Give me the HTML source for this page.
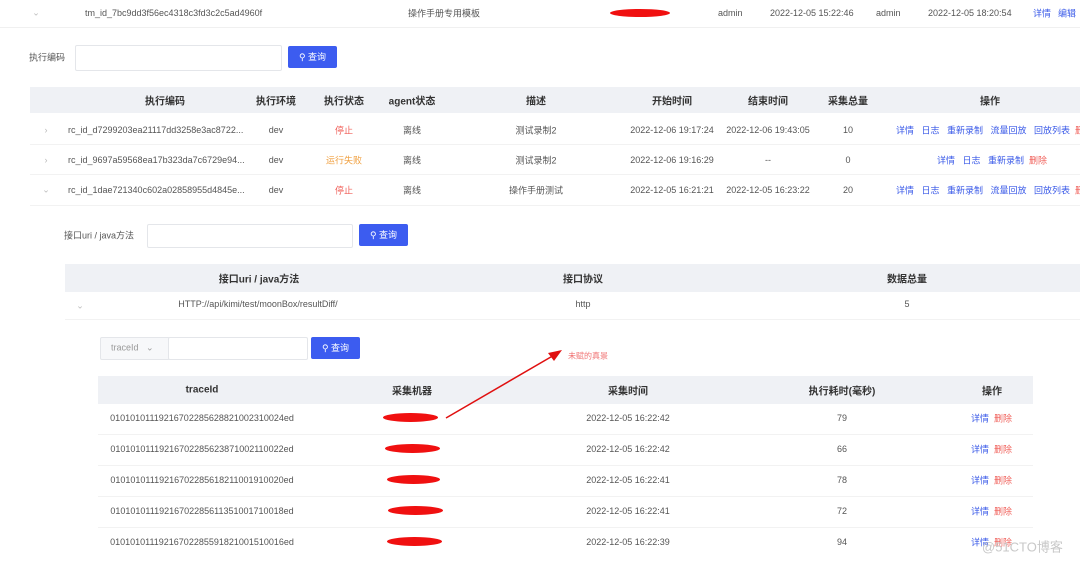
<!DOCTYPE html><html><head><meta charset="utf-8"><style>
body{margin:0;width:1080px;height:563px;overflow:hidden;background:#fff;font-family:"Liberation Sans","Noto Sans CJK SC",sans-serif;font-size:9px;color:#555;position:relative}
.c{position:absolute;transform:translate(-50%,-50%);white-space:nowrap}
.l{position:absolute;transform:translateY(-50%);white-space:nowrap}
.b{position:absolute}
.hd{color:#333;font-weight:bold;font-size:10px}
.blue{color:#3a5ae8}.red{color:#f0605a}.org{color:#f0a040}
.btn{position:absolute;background:#3c5cf0;color:#fff;border-radius:2px;font-size:9px;text-align:center}
.inp{position:absolute;border:1px solid #e4e6ea;border-radius:2px;background:#fff}
.blob{position:absolute;background:#f01010;border-radius:50%}
</style></head><body>
<div class="b" style="left:0;top:27px;width:1080px;height:1px;background:#f0f0f0"></div>
<span class="c" style="left:36px;top:13px;color:#bbb">⌄</span>
<span class="l" style="left:85px;top:13px">tm_id_7bc9dd3f56ec4318c3fd3c2c5ad4960f</span>
<span class="l" style="left:408px;top:13px">操作手册专用模板</span>
<div class="blob" style="left:610px;top:9px;width:60px;height:8px"></div>
<span class="l" style="left:718px;top:13px">admin</span>
<span class="l" style="left:770px;top:13px">2022-12-05 15:22:46</span>
<span class="l" style="left:876px;top:13px">admin</span>
<span class="l" style="left:928px;top:13px">2022-12-05 18:20:54</span>
<span class="l blue" style="left:1033px;top:13px">详情</span><span class="l blue" style="left:1058px;top:13px">编辑</span>

<span class="l" style="left:29px;top:57px">执行编码</span>
<div class="inp" style="left:75px;top:45px;width:205px;height:24px"></div>
<div class="btn" style="left:288px;top:46px;width:49px;height:22px;line-height:22px">⚲ 查询</div>

<div class="b" style="left:30px;top:87px;width:1050px;height:26px;background:#eff1f5"></div>
<span class="c hd" style="left:165px;top:100px">执行编码</span>
<span class="c hd" style="left:276px;top:100px">执行环境</span>
<span class="c hd" style="left:344px;top:100px">执行状态</span>
<span class="c hd" style="left:412px;top:100px">agent状态</span>
<span class="c hd" style="left:536px;top:100px">描述</span>
<span class="c hd" style="left:672px;top:100px">开始时间</span>
<span class="c hd" style="left:768px;top:100px">结束时间</span>
<span class="c hd" style="left:848px;top:100px">采集总量</span>
<span class="c hd" style="left:990px;top:100px">操作</span>
<div class="b" style="left:30px;top:144px;width:1050px;height:1px;background:#f2f2f2"></div>
<div class="b" style="left:30px;top:174px;width:1050px;height:1px;background:#f2f2f2"></div>
<div class="b" style="left:30px;top:205px;width:1050px;height:1px;background:#f2f2f2"></div>

<span class="c" style="left:46px;top:130px;color:#bbb">›</span>
<span class="l" style="left:68px;top:130px">rc_id_d7299203ea21117dd3258e3ac8722...</span>
<span class="c" style="left:276px;top:130px">dev</span><span class="c red" style="left:344px;top:130px">停止</span><span class="c" style="left:412px;top:130px">离线</span>
<span class="c" style="left:536px;top:130px">测试录制2</span><span class="c" style="left:672px;top:130px">2022-12-06 19:17:24</span><span class="c" style="left:768px;top:130px">2022-12-06 19:43:05</span><span class="c" style="left:848px;top:130px">10</span>
<span class="l blue" style="left:896px;top:130px">详情 &nbsp; 日志 &nbsp; 重新录制 &nbsp; 流量回放 &nbsp; 回放列表 &nbsp;<span class="red">删除</span></span>

<span class="c" style="left:46px;top:160px;color:#bbb">›</span>
<span class="l" style="left:68px;top:160px">rc_id_9697a59568ea17b323da7c6729e94...</span>
<span class="c" style="left:276px;top:160px">dev</span><span class="c org" style="left:344px;top:160px">运行失败</span><span class="c" style="left:412px;top:160px">离线</span>
<span class="c" style="left:536px;top:160px">测试录制2</span><span class="c" style="left:672px;top:160px">2022-12-06 19:16:29</span><span class="c" style="left:768px;top:160px">--</span><span class="c" style="left:848px;top:160px">0</span>
<span class="l blue" style="left:937px;top:160px">详情 &nbsp; 日志 &nbsp; 重新录制 &nbsp;<span class="red">删除</span></span>

<span class="c" style="left:46px;top:190px;color:#bbb">⌄</span>
<span class="l" style="left:68px;top:190px">rc_id_1dae721340c602a02858955d4845e...</span>
<span class="c" style="left:276px;top:190px">dev</span><span class="c red" style="left:344px;top:190px">停止</span><span class="c" style="left:412px;top:190px">离线</span>
<span class="c" style="left:536px;top:190px">操作手册测试</span><span class="c" style="left:672px;top:190px">2022-12-05 16:21:21</span><span class="c" style="left:768px;top:190px">2022-12-05 16:23:22</span><span class="c" style="left:848px;top:190px">20</span>
<span class="l blue" style="left:896px;top:190px">详情 &nbsp; 日志 &nbsp; 重新录制 &nbsp; 流量回放 &nbsp; 回放列表 &nbsp;<span class="red">删除</span></span>

<span class="l" style="left:64px;top:235px">接口uri / java方法</span>
<div class="inp" style="left:147px;top:224px;width:204px;height:22px"></div>
<div class="btn" style="left:359px;top:224px;width:49px;height:22px;line-height:22px">⚲ 查询</div>

<div class="b" style="left:65px;top:264px;width:1015px;height:28px;background:#eff1f5"></div>
<span class="c hd" style="left:259px;top:278px">接口uri / java方法</span>
<span class="c hd" style="left:583px;top:278px">接口协议</span>
<span class="c hd" style="left:907px;top:278px">数据总量</span>
<span class="c" style="left:80px;top:306px;color:#bbb">⌄</span>
<span class="c" style="left:258px;top:304px">HTTP://api/kimi/test/moonBox/resultDiff/</span>
<span class="c" style="left:583px;top:304px">http</span>
<span class="c" style="left:907px;top:304px">5</span>
<div class="b" style="left:65px;top:319px;width:1015px;height:1px;background:#f2f2f2"></div>

<div class="inp" style="left:100px;top:337px;width:68px;height:21px;background:#f7f8fa"></div>
<span class="l" style="left:111px;top:348px;color:#999">traceId &nbsp; ⌄</span>
<div class="inp" style="left:168px;top:337px;width:138px;height:21px"></div>
<div class="btn" style="left:311px;top:337px;width:49px;height:22px;line-height:22px">⚲ 查询</div>
<span class="l" style="left:568px;top:356px;color:#f07070;font-size:8px">未赋的真景</span>

<div class="b" style="left:98px;top:376px;width:935px;height:28px;background:#eff1f5"></div>
<span class="c hd" style="left:202px;top:390px">traceId</span>
<span class="c hd" style="left:412px;top:390px">采集机器</span>
<span class="c hd" style="left:628px;top:390px">采集时间</span>
<span class="c hd" style="left:842px;top:390px">执行耗时(毫秒)</span>
<span class="c hd" style="left:992px;top:390px">操作</span>

<div class="b" style="left:98px;top:434px;width:935px;height:1px;background:#f2f2f2"></div>
<div class="b" style="left:98px;top:465px;width:935px;height:1px;background:#f2f2f2"></div>
<div class="b" style="left:98px;top:496px;width:935px;height:1px;background:#f2f2f2"></div>
<div class="b" style="left:98px;top:527px;width:935px;height:1px;background:#f2f2f2"></div>

<span class="c" style="left:202px;top:418px">01010101119216702285628821002310024ed</span><div class="blob" style="left:383px;top:413px;width:55px;height:9px"></div><span class="c" style="left:628px;top:418px">2022-12-05 16:22:42</span><span class="c" style="left:842px;top:418px">79</span><span class="l blue" style="left:971px;top:418px">详情 &nbsp;<span class="red">删除</span></span>
<span class="c" style="left:202px;top:449px">01010101119216702285623871002110022ed</span><div class="blob" style="left:385px;top:444px;width:55px;height:9px"></div><span class="c" style="left:628px;top:449px">2022-12-05 16:22:42</span><span class="c" style="left:842px;top:449px">66</span><span class="l blue" style="left:971px;top:449px">详情 &nbsp;<span class="red">删除</span></span>
<span class="c" style="left:202px;top:480px">01010101119216702285618211001910020ed</span><div class="blob" style="left:387px;top:475px;width:53px;height:9px"></div><span class="c" style="left:628px;top:480px">2022-12-05 16:22:41</span><span class="c" style="left:842px;top:480px">78</span><span class="l blue" style="left:971px;top:480px">详情 &nbsp;<span class="red">删除</span></span>
<span class="c" style="left:202px;top:511px">01010101119216702285611351001710018ed</span><div class="blob" style="left:388px;top:506px;width:55px;height:9px"></div><span class="c" style="left:628px;top:511px">2022-12-05 16:22:41</span><span class="c" style="left:842px;top:511px">72</span><span class="l blue" style="left:971px;top:511px">详情 &nbsp;<span class="red">删除</span></span>
<span class="c" style="left:202px;top:542px">01010101119216702285591821001510016ed</span><div class="blob" style="left:387px;top:537px;width:55px;height:9px"></div><span class="c" style="left:628px;top:542px">2022-12-05 16:22:39</span><span class="c" style="left:842px;top:542px">94</span><span class="l blue" style="left:971px;top:542px">详情 &nbsp;<span class="red">删除</span></span>

<svg class="b" style="left:0;top:0" width="1080" height="563"><line x1="446" y1="418" x2="556" y2="354" stroke="#e01010" stroke-width="1.5"/><polygon points="562,350 548,353 554,361" fill="#e01010"/></svg>
<span class="l" style="left:982px;top:546px;color:#c8c8c8;font-size:13px">@51CTO博客</span>
</body></html>
